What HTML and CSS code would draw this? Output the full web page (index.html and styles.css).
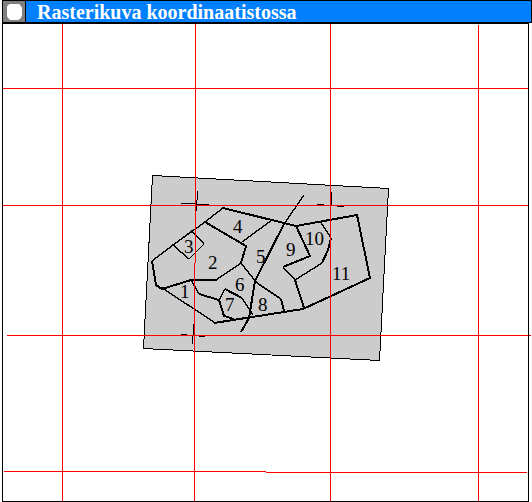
FILE: index.html
```
<!DOCTYPE html>
<html lang="fi">
<head>
	<meta charset="utf-8">
	<title>Rasterikuva koordinaatistossa</title>
	<link rel="stylesheet" href="styles.css">
</head>
<body>
	<div class="titlebar">
		<button class="menu" type="button" aria-label="Valikko">
			<svg width="15" height="16" viewBox="0 0 15 16"><path d="M3 0H12L14 2L15 4V12L13 15L11 16H3L1 14L0 12V3L1 1Z"/></svg>
		</button>
		<h1>Rasterikuva koordinaatistossa</h1>
	</div>
	<div class="map">
		<svg viewBox="3 24 525 477">
			<!-- scanned sheet -->
			<path class="sheet" d="M152.5 175.5L388.5 188.5L379.5 360.5L143.5 348.5Z"/>

			<!-- parcels -->
			<g class="thin">
				<path d="M152 261L173 245L205 222L223 208M162 288L214 322"/>
				<path d="M173 245L192 231L204 244L189 259Z"/>
				<path d="M272 220L242 242M241 263L257 283L281 299"/>
				<path d="M304 195L284 224M320 221L331 238M322 263L295 280L283 267"/>
				<path d="M216 280L241 263M191 280L199 294M225 289L219 300M242 298L253 315"/>
			</g>
			<g class="thick">
				<path d="M223 208L296 226L357 215L370 278L303 309L214 323"/>
				<path d="M205 222L246 246L241 263"/>
				<path d="M152 261L156 285L162 289L191 280H216"/>
				<path d="M199 294L219 300L224 316L234 319M225 289L242 298"/>
				<path d="M284 224L255 281L249 318L241 332"/>
				<path d="M296 226L310 256L283 267M295 280L304 308"/>
				<path d="M331 238L328 250L322 263M281 299L284 311"/>
			</g>

			<!-- sheet's own crosses -->
			<path class="tick" d="M181 203.5H196M196 204.5H209M197.5 191V200M196.5 200V211M317 204.5H324M337 206.5H344M331.5 192V205M181 334.5H187M199 336.5H205M193.5 324V335M192.5 336V344"/>

			<!-- coordinate grid -->
			<path class="grid" d="M62.5 24V501M195.5 24V263M194.5 263V501M330.5 24V501M478.5 25V501M1 88.5H2M3 88.5H528M0 205.5H2M3 205.5H528M7 335.5H528M529 335.5H531M4 471.5H266M266 472.5H527"/>

			<g class="num">
				<text x="180" y="298">1</text>
				<text x="208" y="269">2</text>
				<text x="184" y="253">3</text>
				<text x="233" y="233">4</text>
				<text x="256" y="263">5</text>
				<text x="235" y="291">6</text>
				<text x="225" y="311">7</text>
				<text x="258" y="311">8</text>
				<text x="286" y="256">9</text>
				<text x="305" y="245">10</text>
				<text x="332" y="280">11</text>
			</g>
		</svg>
	</div>
</body>
</html>
```
FILE: styles.css
```
body {
	margin: 0 0 0 2px;
	background: white;
	font-family: "Liberation Serif", "Times New Roman", serif;
}

.titlebar {
	display: flex;
	box-sizing: border-box;
	height: 23px;
	border: 1px solid black;
	background: #0080ff;
	color: white;
}

.menu {
	display: flex;
	align-items: center;
	justify-content: center;
	width: 23px;
	padding: 0;
	border: none;
	border-right: 1px solid black;
	background: #808080;
}

.menu svg {
	fill: white;
}

.titlebar h1 {
	margin: 0;
	padding-left: 11px;
	font-size: 20px;
	line-height: 22px;
	white-space: nowrap;
}

.map {
	margin-right: 3px;
	border: 1px solid black;
}

.map svg {
	display: block;
	width: 100%;
	overflow: visible;
}

.sheet {
	fill: #ccc;
	stroke: black;
	shape-rendering: crispEdges;
}

.thin,
.thick,
.tick,
.grid {
	fill: none;
	stroke: black;
	shape-rendering: crispEdges;
}

.thin {
	stroke-width: 1.4;
}

.thick {
	stroke-width: 2;
}

.grid {
	stroke: red;
}

.num {
	font-size: 19px;
}
```
